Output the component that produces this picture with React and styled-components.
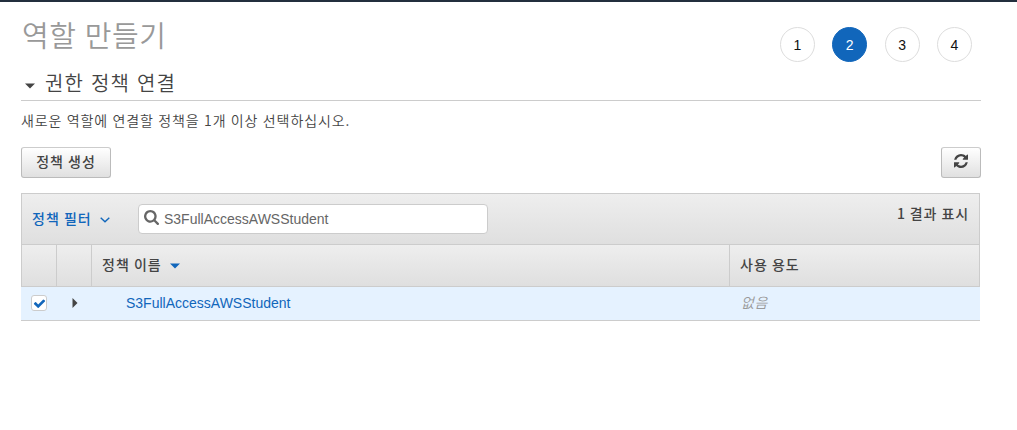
import React from "react";
import styled, { createGlobalStyle } from "styled-components";

const KR = '"Noto Sans CJK KR", sans-serif';

const GlobalStyle = createGlobalStyle`
  * { box-sizing: border-box; }
  body {
    margin: 0;
    background: #fff;
    color: #444;
    font-family: "Liberation Sans", "Noto Sans CJK KR", sans-serif;
    font-size: 14px;
  }
`;

const Page = styled.div`
  height: 430px;
  border-top: 2px solid #232f3e;
  padding: 0 36px 0 21px;
  overflow: hidden;
`;

const Header = styled.header`
  display: flex;
  justify-content: space-between;
  height: 66px;
  padding-right: 9px;
`;

const Title = styled.h1`
  margin: 12px 0 0 1px;
  font: 350 29px/40px ${KR};
  letter-spacing: 0.6px;
  word-spacing: 1px;
  color: #999;
  white-space: nowrap;
`;

const Steps = styled.ol`
  display: flex;
  gap: 17.4px;
  margin: 25px 0 0;
  padding: 0;
  list-style: none;
`;

const Step = styled.li`
  width: 35px;
  height: 35px;
  border: 1px solid ${(p) => (p.$active ? "#1166bb" : "#ddd")};
  border-radius: 50%;
  background: ${(p) => (p.$active ? "#1166bb" : "#fff")};
  color: ${(p) => (p.$active ? "#fff" : "#111")};
  line-height: 35px;
  text-align: center;
`;

const SectionHeading = styled.h2`
  display: flex;
  align-items: center;
  gap: 10px;
  height: 33px;
  margin: 0;
  padding: 0 0 3px 4px;
  border-bottom: 1px solid #ccc;
  font: 350 20px/28px ${KR};
  letter-spacing: 1.1px;
  word-spacing: 1.4px;
  color: #444;

  svg { margin-top: 7px; }
`;

const Description = styled.p`
  margin: 9px 0 16px 0;
  font: 350 14px/21px ${KR};
  letter-spacing: 0.9px;
  word-spacing: 0.4px;
  white-space: nowrap;
`;

const Actions = styled.div`
  display: flex;
  justify-content: space-between;
  margin-bottom: 15px;
`;

const Button = styled.button`
  display: flex;
  align-items: center;
  justify-content: center;
  width: ${(p) => p.$width}px;
  height: 31px;
  padding: 0 0 4px;
  border: 1px solid #bbb;
  border-top-color: #ccc;
  border-radius: 3px;
  background: linear-gradient(#fff, #e0e0e0);
  color: #444;
  font: 500 14px/20px ${KR};
  letter-spacing: 1px;
`;

const Panel = styled.section`
  width: 959px;
`;

const FilterBar = styled.div`
  display: flex;
  align-items: flex-start;
  height: 52px;
  padding: 10px 10px 0;
  border: 1px solid #ccc;
  background: linear-gradient(#eee, #dfdfdf);
`;

const FilterLink = styled.a`
  display: flex;
  align-items: center;
  gap: 8px;
  width: 106px;
  height: 28px;
  color: #1166bb;
  font: 500 14px/20px ${KR};
  letter-spacing: 1px;

  svg { margin-top: 4px; }
`;

const SearchBox = styled.div`
  display: flex;
  align-items: center;
  gap: 5px;
  width: 350px;
  height: 30px;
  padding-left: 5px;
  border: 1px solid #ccc;
  border-radius: 4px;
  background: #fff;
  color: #666;

  svg { margin-top: -3px; }
`;

const ResultCount = styled.span`
  margin: -1px 0 0 auto;
  font: 500 14px/20px ${KR};
  letter-spacing: 0.9px;
`;

const Row = styled.div`
  display: grid;
  grid-template-columns: 35px 35px 638px 1fr;
`;

const HeadRow = styled(Row)`
  height: 42px;
  border: solid #ccc;
  border-width: 0 1px 1px 0;
  background: linear-gradient(#eee, #dfdfdf);
`;

const HeadCell = styled.div`
  display: flex;
  align-items: center;
  gap: 8px;
  padding: 0 0 4px 10px;
  border-left: 1px solid #ccc;
  font: 500 14px/20px ${KR};
  letter-spacing: 1px;

  svg { margin-top: 5px; }
`;

const BodyRow = styled(Row)`
  height: 34px;
  padding-bottom: 1px;
  border-bottom: 1px solid #ccc;
  background: #e5f2ff;
`;

const Cell = styled.div`
  display: flex;
  align-items: center;
  padding-left: ${(p) => p.$indent}px;
`;

const PolicyLink = styled.a`
  color: #1166bb;
`;

const None = styled.em`
  margin-top: -2px;
  color: #999;
  font: italic 350 14px/20px ${KR};
  letter-spacing: 0.6px;
`;

const Checkbox = styled.span`
  display: flex;
  align-items: center;
  justify-content: center;
  width: 16px;
  height: 16px;
  border: 1px solid #ccc;
  border-radius: 3px;
  background: #fff;
`;

const CaretDown = ({ color }) => (
  <svg width="10" height="6" viewBox="0 0 10 6" fill={color}>
    <path d="M0 .5h10L5 5.5z" />
  </svg>
);

const CaretRight = () => (
  <svg width="6" height="10" viewBox="0 0 6 10" fill="#444">
    <path d="M.5 0v10L5.5 5z" />
  </svg>
);

const ChevronDown = () => (
  <svg width="10" height="6" viewBox="0 0 10 6" fill="none" stroke="#1166bb" strokeWidth="1.4">
    <path d="M.7 .7 5 4.8 9.3 .7" />
  </svg>
);

const SearchIcon = () => (
  <svg width="15" height="15" viewBox="0 0 1664 1664" fill="#666">
    <path d="M1152 704q0-185-131.5-316.5t-316.5-131.5-316.5 131.5-131.5 316.5 131.5 316.5 316.5 131.5 316.5-131.5 131.5-316.5zm512 832q0 52-38 90t-90 38q-54 0-90-38l-343-342q-179 124-399 124-143 0-273.5-55.5t-225-150-150-225-55.5-273.5 55.5-273.5 150-225 225-150 273.5-55.5 273.5 55.5 225 150 150 225 55.5 273.5q0 220-124 399l343 343q37 37 37 90z" />
  </svg>
);

const RefreshIcon = () => (
  <svg width="14" height="14" viewBox="0 0 1536 1536" fill="#444">
    <path d="M1511 928q0 5-1 7-64 268-268 434.5t-478 166.5q-146 0-282.5-55t-243.5-157l-129 129q-19 19-45 19t-45-19-19-45v-448q0-26 19-45t45-19h448q26 0 45 19t19 45-19 45l-137 137q71 66 161 102t187 36q134 0 250-65t186-179q11-17 53-117 8-23 30-23h192q13 0 22.5 9.5t9.5 22.5zm25-800v448q0 26-19 45t-45 19h-448q-26 0-45-19t-19-45 19-45l138-138q-148-137-349-137-134 0-250 65t-186 179q-11 17-53 117-8 23-30 23h-199q-13 0-22.5-9.5t-9.5-22.5v-7q65-268 270-434.5t480-166.5q146 0 284 55.5t245 156.5l130-129q19-19 45-19t45 19 19 45z" />
  </svg>
);

const CheckIcon = () => (
  <svg width="13" height="13" viewBox="0 0 1792 1792" fill="#1166bb">
    <path d="M1671 566q0 40-28 68l-724 724-136 136q-28 28-68 28t-68-28l-136-136-362-362q-28-28-28-68t28-68l136-136q28-28 68-28t68 28l294 295 656-657q28-28 68-28t68 28l136 136q28 28 28 68z" />
  </svg>
);

export default function App() {
  return (
    <Page>
      <GlobalStyle />
      <Header>
        <Title>역할 만들기</Title>
        <Steps>
          {[1, 2, 3, 4].map((n) => (
            <Step key={n} $active={n === 2}>{n}</Step>
          ))}
        </Steps>
      </Header>
      <SectionHeading>
        <CaretDown color="#444" />
        권한 정책 연결
      </SectionHeading>
      <Description>새로운 역할에 연결할 정책을 1개 이상 선택하십시오.</Description>
      <Actions>
        <Button $width={90}>정책 생성</Button>
        <Button $width={40} aria-label="새로 고침"><RefreshIcon /></Button>
      </Actions>
      <Panel>
        <FilterBar>
          <FilterLink>정책 필터<ChevronDown /></FilterLink>
          <SearchBox><SearchIcon />S3FullAccessAWSStudent</SearchBox>
          <ResultCount>1 결과 표시</ResultCount>
        </FilterBar>
        <HeadRow>
          <HeadCell />
          <HeadCell />
          <HeadCell>정책 이름<CaretDown color="#1166bb" /></HeadCell>
          <HeadCell>사용 용도</HeadCell>
        </HeadRow>
        <BodyRow>
          <Cell $indent={10}><Checkbox><CheckIcon /></Checkbox></Cell>
          <Cell $indent={16}><CaretRight /></Cell>
          <Cell $indent={35}><PolicyLink>S3FullAccessAWSStudent</PolicyLink></Cell>
          <Cell $indent={12}><None>없음</None></Cell>
        </BodyRow>
      </Panel>
    </Page>
  );
}
